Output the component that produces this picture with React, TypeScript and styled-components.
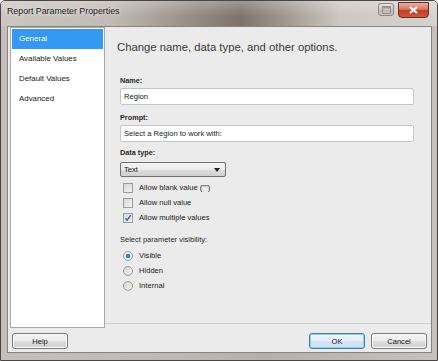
import React from 'react';
import styled, { createGlobalStyle } from 'styled-components';

const GlobalStyle = createGlobalStyle`
  html, body {
    margin: 0;
    padding: 0;
    background: #ffffff;
    overflow: hidden;
  }
  body {
    font-family: "Liberation Sans", Arial, sans-serif;
  }
`;

const navItems = ['General', 'Available Values', 'Default Values', 'Advanced'];

const checks = [
  { label: 'Allow blank value ("")', checked: false },
  { label: 'Allow null value', checked: false },
  { label: 'Allow multiple values', checked: true },
];

const radios = [
  { label: 'Visible', selected: true },
  { label: 'Hidden', selected: false },
  { label: 'Internal', selected: false },
];

const App: React.FC = () => {
  return (
    <>
      <GlobalStyle />
      <Window>
        <TitleBar>
          <Title>Report Parameter Properties</Title>
          <Controls>
            <GlassButton>
              <svg width="9" height="8" viewBox="0 0 9 8">
                <rect x="0.5" y="0.5" width="8" height="7" fill="none" stroke="#8a8a8a" />
                <rect x="0.5" y="0.5" width="8" height="2" fill="#9a9a9a" />
              </svg>
            </GlassButton>
            <CloseButton>
              <svg width="9" height="8" viewBox="0 0 9 8">
                <path d="M1 1 L8 7 M8 1 L1 7" stroke="#ffffff" strokeWidth="2" />
              </svg>
            </CloseButton>
          </Controls>
        </TitleBar>
        <Frame>
          <Client>
            <Main>
              <Nav>
                {navItems.map((item, i) => (
                  <NavItem key={item} $active={i === 0}>
                    {item}
                  </NavItem>
                ))}
              </Nav>
              <Content>
                <Heading>Change name, data type, and other options.</Heading>
                <Label>Name:</Label>
                <TextBox $gap={8}>Region</TextBox>
                <Label>Prompt:</Label>
                <TextBox $gap={6}>Select a Region to work with:</TextBox>
                <Label>Data type:</Label>
                <Select>
                  <span>Text</span>
                  <svg width="6" height="4" viewBox="0 0 6 4">
                    <path d="M0 0 L6 0 L3 4 Z" fill="#222" />
                  </svg>
                </Select>
                <OptionList>
                  {checks.map((c) => (
                    <OptionRow key={c.label}>
                      <CheckBox>
                        {c.checked && (
                          <svg width="8" height="8" viewBox="0 0 8 8">
                            <path d="M1.5 4.2 L3.2 6.2 L6.8 1.2" fill="none" stroke="#3a5bb5" strokeWidth="1.4" />
                          </svg>
                        )}
                      </CheckBox>
                      <span>{c.label}</span>
                    </OptionRow>
                  ))}
                </OptionList>
                <VisLabel>Select parameter visibility:</VisLabel>
                <OptionList>
                  {radios.map((r) => (
                    <OptionRow key={r.label}>
                      <Radio $selected={r.selected} />
                      <span>{r.label}</span>
                    </OptionRow>
                  ))}
                </OptionList>
              </Content>
            </Main>
            <Footer>
              <Button>Help</Button>
              <FooterRight>
                <Button $default>OK</Button>
                <Button>Cancel</Button>
              </FooterRight>
            </Footer>
          </Client>
        </Frame>
      </Window>
    </>
  );
};

const Window = styled.div`
  width: 438px;
  height: 361px;
  box-sizing: border-box;
  display: flex;
  flex-direction: column;
  border: 1px solid #4a4646;
  border-radius: 5px 5px 0 0;
  background: linear-gradient(90deg, #c6beba 0%, #c0b8b4 40%, #b8aeaa 60%, #c8c0bc 100%);
  overflow: hidden;
`;

const TitleBar = styled.div`
  height: 25px;
  flex-shrink: 0;
  display: flex;
  align-items: flex-start;
  padding: 0 8px 0 6px;
  background:
    linear-gradient(180deg, rgba(255, 255, 255, 0.25) 0%, rgba(255, 255, 255, 0) 60%),
    linear-gradient(90deg, #cbc6c2 0%, #c2bbb6 25%, #9a918a 42%, #7d736c 55%, #a09890 65%, #cdc8c4 78%, #d6d2cf 100%);
`;

const Title = styled.div`
  font-size: 8.8px;
  color: #1a1a1a;
  margin-top: 5px;
  text-shadow: 0 0 4px rgba(255, 255, 255, 0.9);
`;

const Controls = styled.div`
  margin-left: auto;
  display: flex;
  align-items: flex-start;
  gap: 4px;
  margin-top: 1px;
`;

const GlassButton = styled.div`
  width: 16px;
  height: 13px;
  margin-top: 1px;
  box-sizing: border-box;
  border: 1px solid #8c8682;
  border-radius: 3px;
  background: linear-gradient(180deg, #e6e2e0 0%, #cfc9c6 50%, #bdb6b2 51%, #d2ccc8 100%);
  display: flex;
  align-items: center;
  justify-content: center;
`;

const CloseButton = styled.div`
  width: 31px;
  height: 16px;
  box-sizing: border-box;
  border: 1px solid #6e2a1e;
  border-radius: 0 0 4px 4px;
  background: linear-gradient(180deg, #eab2a2 0%, #d8765e 45%, #c23b22 55%, #d0583c 100%);
  display: flex;
  align-items: center;
  justify-content: center;
`;

const Frame = styled.div`
  flex: 1;
  display: flex;
  padding: 0 5px 7px 6px;
`;

const Client = styled.div`
  flex: 1;
  display: flex;
  flex-direction: column;
  background: #ebebeb;
  border: 1px solid #8a8280;
  box-sizing: border-box;
`;

const Main = styled.div`
  display: flex;
  height: 301px;
  padding: 0 0 0 2px;
`;

const Nav = styled.div`
  width: 95px;
  height: 301px;
  box-sizing: border-box;
  background: #ffffff;
  border: 1px solid #a8a8a8;
  padding: 1px;
  display: flex;
  flex-direction: column;
`;

const NavItem = styled.div<{ $active?: boolean }>`
  height: 20px;
  line-height: 20px;
  padding-left: 7px;
  font-size: 7.9px;
  color: ${(p) => (p.$active ? '#ffffff' : '#1a1a1a')};
  background: ${(p) => (p.$active ? '#3399f5' : 'transparent')};
`;

const Content = styled.div`
  flex: 1;
  height: 297px;
  box-sizing: border-box;
  border-bottom: 1px solid #d2d2d2;
  padding: 13px 17px 0 15px;
  display: flex;
  flex-direction: column;
  align-items: flex-start;
`;

const Heading = styled.div`
  font-size: 11.3px;
  color: #3a3a3a;
  margin-left: -3px;
  line-height: 14px;
  margin-bottom: 22px;
`;

const Label = styled.div`
  font-size: 7.3px;
  font-weight: bold;
  color: #2a2a2a;
  line-height: 10px;
  margin-bottom: 2px;
`;

const VisLabel = styled.div`
  font-size: 7.5px;
  color: #2a2a2a;
  line-height: 10px;
  margin-top: 10px;
  margin-bottom: 3px;
`;

const TextBox = styled.div<{ $gap: number }>`
  align-self: stretch;
  height: 17px;
  box-sizing: border-box;
  border: 1px solid #c4c6cc;
  border-radius: 2px;
  background: #ffffff;
  padding-left: 3px;
  font-size: 7.6px;
  line-height: 15px;
  color: #1a1a1a;
  margin-bottom: ${(p) => p.$gap}px;
`;

const Select = styled.div`
  width: 106px;
  height: 15px;
  box-sizing: border-box;
  border: 1px solid #707070;
  border-radius: 2px;
  background: linear-gradient(180deg, #f4f4f4 0%, #ebebeb 50%, #dddddd 51%, #d0d0d0 100%);
  display: flex;
  align-items: center;
  justify-content: space-between;
  padding: 0 5px 0 3px;
  font-size: 7.6px;
  color: #1a1a1a;
  margin-top: 2px;
  margin-bottom: 3px;
`;

const OptionList = styled.div`
  display: flex;
  flex-direction: column;
  padding-left: 3px;
`;

const OptionRow = styled.div`
  height: 15px;
  display: flex;
  align-items: center;
  gap: 6px;
  font-size: 7.6px;
  color: #1a1a1a;
`;

const CheckBox = styled.div`
  width: 10px;
  height: 10px;
  box-sizing: border-box;
  border: 1px solid #9c9c9c;
  background: linear-gradient(135deg, #d8d8d8 0%, #f2f2f2 100%);
  display: flex;
  align-items: center;
  justify-content: center;
`;

const Radio = styled.div<{ $selected?: boolean }>`
  width: 10px;
  height: 10px;
  box-sizing: border-box;
  border-radius: 50%;
  border: 1px solid #9c9c9c;
  background: ${(p) =>
    p.$selected
      ? 'radial-gradient(circle, #1f6fbf 0%, #2f8ad8 35%, #e6eef6 45%, #f2f2f2 100%)'
      : 'linear-gradient(135deg, #d4d4d4 0%, #f4f4f4 100%)'};
`;

const Footer = styled.div`
  flex: 1;
  display: flex;
  align-items: flex-start;
  padding: 5px 4px 0 4px;
`;

const FooterRight = styled.div`
  margin-left: auto;
  display: flex;
  gap: 6px;
`;

const Button = styled.div<{ $default?: boolean }>`
  width: 56px;
  height: 16px;
  box-sizing: border-box;
  border: 1px solid ${(p) => (p.$default ? '#3c7fb1' : '#7a7a7a')};
  border-radius: 3px;
  background: ${(p) =>
    p.$default
      ? 'linear-gradient(180deg, #f0f6fb 0%, #e4eef7 50%, #d4e4f2 51%, #cfe0ef 100%)'
      : 'linear-gradient(180deg, #f4f4f4 0%, #ebebeb 50%, #dddddd 51%, #d2d2d2 100%)'};
  box-shadow: ${(p) => (p.$default ? 'inset 0 0 0 1px #8fd0f0' : 'inset 0 0 0 1px #fbfbfb')};
  font-size: 7.6px;
  color: #1a1a1a;
  display: flex;
  align-items: center;
  justify-content: center;
`;

export default App;
